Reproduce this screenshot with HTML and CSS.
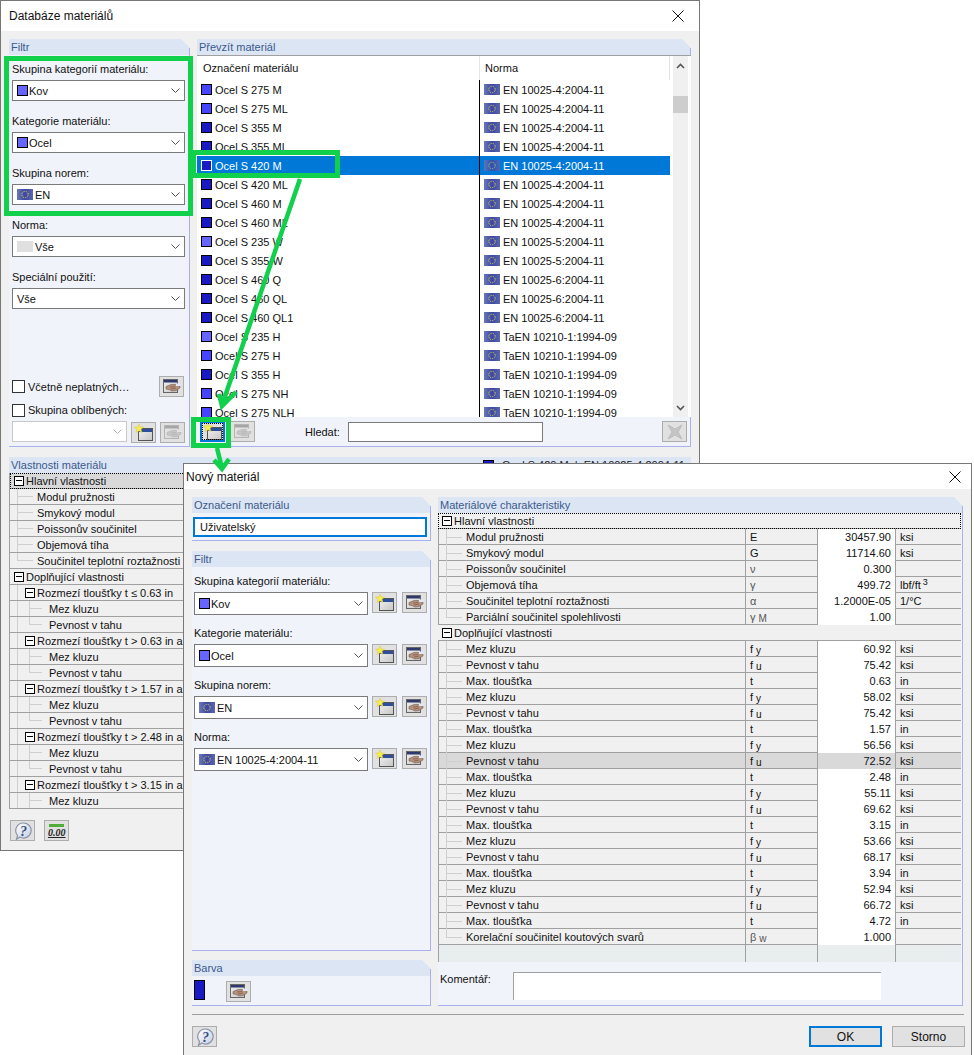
FILE: index.html
```html
<!DOCTYPE html>
<html lang="cs">
<head>
<meta charset="utf-8">
<title>Databáze materiálů</title>
<link rel="stylesheet" href="styles.css">
</head>
<body>
<svg class="defs" aria-hidden="true">
  <defs>
    <linearGradient id="flagbg" x1="0" y1="0" x2="1" y2="0"><stop offset="0" stop-color="#6a78b8"/><stop offset=".5" stop-color="#3c48a0"/><stop offset="1" stop-color="#5a66b0"/></linearGradient>
    <linearGradient id="bubble" x1="0" y1="0" x2="1" y2="1"><stop offset="0" stop-color="#ffffff"/><stop offset="1" stop-color="#c4cde0"/></linearGradient>
    <linearGradient id="winbody" x1="0" y1="0" x2="1" y2="1"><stop offset="0" stop-color="#f2f2f2"/><stop offset="1" stop-color="#c6c6c6"/></linearGradient>
    <symbol id="flag" viewBox="0 0 16 11"><rect width="16" height="11" fill="url(#flagbg)"/><circle cx="8" cy="5.5" r="3.2" fill="none" stroke="#e8d850" stroke-width="1" stroke-dasharray="1 1"/></symbol>
    <symbol id="chev" viewBox="0 0 9 5"><path d="M.5.5 4.500 4.500 8.500.5" fill="none" stroke="#555" stroke-width="1"/></symbol>
    <symbol id="new" viewBox="0 0 20 17"><rect x="4.500" y="4.500" width="14" height="12" fill="url(#winbody)" stroke="#555"/><rect x="5" y="5" width="13" height="3" fill="#2e4f9c"/><path d="M5 0 6.200 3 9.500 3.200 7 5.300 8 8.500 5 6.800 2 8.500 3 5.300 .5 3.200 3.800 3Z" fill="#f6ee50" stroke="#d8c830" stroke-width=".5"/></symbol>
    <symbol id="hand" viewBox="0 0 20 15"><rect x="1.500" y=".5" width="14" height="13" fill="url(#winbody)" stroke="#666"/><rect x="2" y="1" width="13" height="2.500" fill="#2e3a6e"/><path d="M4 7.500 9 5.500 13 5.500 18 7 18 9 14 11.500 10 12 7 10.500 4 10Z" fill="#b4917c" stroke="#6a4c40" stroke-width=".5"/><path d="M8 8 13 7.500M9 10 14 9" stroke="#6a4c40" stroke-width=".6"/><path d="M14 4.500h5v2.500h-5z" fill="#dfe8f4"/></symbol>
    <symbol id="xmark" viewBox="0 0 16 16"><path d="M1 1 8 5 15 1 11 8 15 15 8 11 1 15 5 8Z" fill="#8f8f8f" stroke="#777"/></symbol>
    <symbol id="help" viewBox="0 0 18 18"><path d="M9.500 1a7.500 7.500 0 1 1-3.600 14L2.500 17.300l1-4A7.500 7.500 0 0 1 9.500 1Z" fill="url(#bubble)" stroke="#8a93a8" stroke-width="1.200"/><text x="9.500" y="14" text-anchor="middle" class="helpq">?</text></symbol>
  </defs>
</svg>

<main class="canvas">
  <section class="win win-db">
    <header class="titlebar"><span>Databáze materiálů</span><svg class="close" viewBox="0 0 12 12"><path d="M.5.5 11.500 11.500M11.500.5.5 11.500"/></svg></header>
    <div class="db-body">
      <div class="db-top">
        <section class="panel">
          <h2 class="phead">Filtr</h2>
          <div class="pbody db-filter">
            <div class="field"><label>Skupina kategorií materiálu:</label><div class="select"><i class="sw l"></i><span class="t1">Kov</span><svg class="chev"><use href="#chev"/></svg></div></div>
            <div class="field"><label>Kategorie materiálu:</label><div class="select"><i class="sw l"></i><span class="t1">Ocel</span><svg class="chev"><use href="#chev"/></svg></div></div>
            <div class="field"><label>Skupina norem:</label><div class="select"><svg class="flag"><use href="#flag"/></svg><span>EN</span><svg class="chev"><use href="#chev"/></svg></div></div>
            <div class="field"><label>Norma:</label><div class="select"><i class="flag blank"></i><span>Vše</span><svg class="chev"><use href="#chev"/></svg></div></div>
            <div class="field"><label>Speciální použití:</label><div class="select"><span>Vše</span><svg class="chev"><use href="#chev"/></svg></div></div>
            <div class="checks">
              <div class="check-row"><i class="check"></i><span class="grow">Včetně neplatných…</span><button class="btn"><svg class="ic-hand"><use href="#hand"/></svg></button></div>
              <div class="check-row second"><i class="check"></i><span>Skupina oblíbených:</span></div>
              <div class="fav-row"><div class="select dis"><svg class="chev"><use href="#chev"/></svg></div><button class="btn"><svg class="ic-new"><use href="#new"/></svg></button><button class="btn off"><svg class="ic-hand"><use href="#hand"/></svg></button></div>
            </div>
          </div>
        </section>
        <section class="panel">
          <h2 class="phead">Převzít materiál</h2>
          <div class="list">
            <div class="rows">
              <div class="row lhead"><div class="nm">Označení materiálu</div><div class="no">Norma</div></div>
              <div class="row"><div class="nm"><i class="sw m"></i>Ocel S 275 M</div><div class="no"><svg class="flag"><use href="#flag"/></svg>EN 10025-4:2004-11</div></div>
              <div class="row"><div class="nm"><i class="sw m"></i>Ocel S 275 ML</div><div class="no"><svg class="flag"><use href="#flag"/></svg>EN 10025-4:2004-11</div></div>
              <div class="row"><div class="nm"><i class="sw d"></i>Ocel S 355 M</div><div class="no"><svg class="flag"><use href="#flag"/></svg>EN 10025-4:2004-11</div></div>
              <div class="row"><div class="nm"><i class="sw d"></i>Ocel S 355 ML</div><div class="no"><svg class="flag"><use href="#flag"/></svg>EN 10025-4:2004-11</div></div>
              <div class="row sel"><div class="nm"><i class="sw d"></i>Ocel S 420 M</div><div class="no"><svg class="flag"><use href="#flag"/></svg>EN 10025-4:2004-11</div></div>
              <div class="row"><div class="nm"><i class="sw d"></i>Ocel S 420 ML</div><div class="no"><svg class="flag"><use href="#flag"/></svg>EN 10025-4:2004-11</div></div>
              <div class="row"><div class="nm"><i class="sw d"></i>Ocel S 460 M</div><div class="no"><svg class="flag"><use href="#flag"/></svg>EN 10025-4:2004-11</div></div>
              <div class="row"><div class="nm"><i class="sw d"></i>Ocel S 460 ML</div><div class="no"><svg class="flag"><use href="#flag"/></svg>EN 10025-4:2004-11</div></div>
              <div class="row"><div class="nm"><i class="sw l"></i>Ocel S 235 W</div><div class="no"><svg class="flag"><use href="#flag"/></svg>EN 10025-5:2004-11</div></div>
              <div class="row"><div class="nm"><i class="sw d"></i>Ocel S 355 W</div><div class="no"><svg class="flag"><use href="#flag"/></svg>EN 10025-5:2004-11</div></div>
              <div class="row"><div class="nm"><i class="sw d"></i>Ocel S 460 Q</div><div class="no"><svg class="flag"><use href="#flag"/></svg>EN 10025-6:2004-11</div></div>
              <div class="row"><div class="nm"><i class="sw d"></i>Ocel S 460 QL</div><div class="no"><svg class="flag"><use href="#flag"/></svg>EN 10025-6:2004-11</div></div>
              <div class="row"><div class="nm"><i class="sw d"></i>Ocel S 460 QL1</div><div class="no"><svg class="flag"><use href="#flag"/></svg>EN 10025-6:2004-11</div></div>
              <div class="row"><div class="nm"><i class="sw l"></i>Ocel S 235 H</div><div class="no"><svg class="flag"><use href="#flag"/></svg>TaEN 10210-1:1994-09</div></div>
              <div class="row"><div class="nm"><i class="sw m"></i>Ocel S 275 H</div><div class="no"><svg class="flag"><use href="#flag"/></svg>TaEN 10210-1:1994-09</div></div>
              <div class="row"><div class="nm"><i class="sw d"></i>Ocel S 355 H</div><div class="no"><svg class="flag"><use href="#flag"/></svg>TaEN 10210-1:1994-09</div></div>
              <div class="row"><div class="nm"><i class="sw m"></i>Ocel S 275 NH</div><div class="no"><svg class="flag"><use href="#flag"/></svg>TaEN 10210-1:1994-09</div></div>
              <div class="row"><div class="nm"><i class="sw m"></i>Ocel S 275 NLH</div><div class="no"><svg class="flag"><use href="#flag"/></svg>TaEN 10210-1:1994-09</div></div>
            </div>
            <div class="scroll">
              <svg class="arrow" viewBox="0 0 9 6"><path d="M1 5 4.500 1.500 8 5" /></svg>
              <div class="thumb"></div>
              <svg class="arrow down" viewBox="0 0 9 6"><path d="M1 1 4.500 4.500 8 1" /></svg>
            </div>
          </div>
          <div class="strip">
            <button class="btn focus"><svg class="ic-new"><use href="#new"/></svg></button>
            <button class="btn off"><svg class="ic-hand"><use href="#hand"/></svg></button>
            <span class="find">Hledat:</span>
            <div class="find-input"></div>
            <button class="btn off push"><svg class="ic-x"><use href="#xmark"/></svg></button>
          </div>
        </section>
      </div>
      <section class="props">
        <h2 class="phead phead-split"><span>Vlastnosti materiálu</span><span class="phead-dark"><i class="sw d"></i>Ocel S 420 M&nbsp; | &nbsp;EN 10025-4:2004-11</span></h2>
        <div class="tree">
          <div class="tr active"><i class="box"></i>Hlavní vlastnosti</div>
          <div class="tr l1">Modul pružnosti</div>
          <div class="tr l1">Smykový modul</div>
          <div class="tr l1">Poissonův součinitel</div>
          <div class="tr l1">Objemová tíha</div>
          <div class="tr l1 end">Součinitel teplotní roztažnosti</div>
          <div class="tr"><i class="box"></i>Doplňující vlastnosti</div>
          <div class="tr g1"><i class="box"></i>Rozmezí tloušťky t ≤ 0.63 in</div>
          <div class="tr l2">Mez kluzu</div>
          <div class="tr l2 end">Pevnost v tahu</div>
          <div class="tr g1"><i class="box"></i>Rozmezí tloušťky t &gt; 0.63 in a t ≤ 1.57 in</div>
          <div class="tr l2">Mez kluzu</div>
          <div class="tr l2 end">Pevnost v tahu</div>
          <div class="tr g1"><i class="box"></i>Rozmezí tloušťky t &gt; 1.57 in a t ≤ 2.48 in</div>
          <div class="tr l2">Mez kluzu</div>
          <div class="tr l2 end">Pevnost v tahu</div>
          <div class="tr g1"><i class="box"></i>Rozmezí tloušťky t &gt; 2.48 in a t ≤ 3.15 in</div>
          <div class="tr l2">Mez kluzu</div>
          <div class="tr l2 end">Pevnost v tahu</div>
          <div class="tr g1"><i class="box"></i>Rozmezí tloušťky t &gt; 3.15 in a t ≤ 3.94 in</div>
          <div class="tr l2">Mez kluzu</div>
        </div>
      </section>
      <div class="db-foot">
        <button class="btn"><svg class="ic-help"><use href="#help"/></svg></button>
        <button class="btn num"><span class="numbar"></span><span class="numtxt">0.00</span></button>
      </div>
    </div>
  </section>

  <section class="win win-new">
    <header class="titlebar t2"><span>Nový materiál</span><svg class="close" viewBox="0 0 12 12"><path d="M.5.5 11.500 11.500M11.500.5.5 11.500"/></svg></header>
    <div class="new-body">
      <div class="new-main">
        <div class="new-left">
          <section class="panel">
            <h2 class="phead">Označení materiálu</h2>
            <div class="pbody name-body"><div class="name-input">Uživatelský</div></div>
          </section>
          <section class="panel filt2">
            <h2 class="phead">Filtr</h2>
            <div class="pbody nf">
              <div class="field2"><label>Skupina kategorií materiálu:</label><div class="sel-row"><div class="select s2"><i class="sw l"></i><span class="t1">Kov</span><svg class="chev"><use href="#chev"/></svg></div><button class="btn"><svg class="ic-new"><use href="#new"/></svg></button><button class="btn"><svg class="ic-hand"><use href="#hand"/></svg></button></div></div>
              <div class="field2"><label>Kategorie materiálu:</label><div class="sel-row"><div class="select s2"><i class="sw l"></i><span class="t1">Ocel</span><svg class="chev"><use href="#chev"/></svg></div><button class="btn"><svg class="ic-new"><use href="#new"/></svg></button><button class="btn"><svg class="ic-hand"><use href="#hand"/></svg></button></div></div>
              <div class="field2"><label>Skupina norem:</label><div class="sel-row"><div class="select s2"><svg class="flag"><use href="#flag"/></svg><span>EN</span><svg class="chev"><use href="#chev"/></svg></div><button class="btn"><svg class="ic-new"><use href="#new"/></svg></button><button class="btn"><svg class="ic-hand"><use href="#hand"/></svg></button></div></div>
              <div class="field2"><label>Norma:</label><div class="sel-row"><div class="select s2"><svg class="flag"><use href="#flag"/></svg><span>EN 10025-4:2004-11</span><svg class="chev"><use href="#chev"/></svg></div><button class="btn"><svg class="ic-new"><use href="#new"/></svg></button><button class="btn"><svg class="ic-hand"><use href="#hand"/></svg></button></div></div>
            </div>
          </section>
          <section class="panel">
            <h2 class="phead">Barva</h2>
            <div class="pbody color-body"><i class="color-sw"></i><button class="btn"><svg class="ic-hand"><use href="#hand"/></svg></button></div>
          </section>
        </div>
        <section class="panel right2">
          <h2 class="phead">Materiálové charakteristiky</h2>
          <div class="grid">
            <div class="gr group active"><i class="box"></i>Hlavní vlastnosti</div>
            <div class="gr"><div class="g-n">Modul pružnosti</div><div class="g-s">E</div><div class="g-v">30457.90</div><div class="g-u">ksi</div></div>
            <div class="gr"><div class="g-n">Smykový modul</div><div class="g-s">G</div><div class="g-v">11714.60</div><div class="g-u">ksi</div></div>
            <div class="gr"><div class="g-n">Poissonův součinitel</div><div class="g-s gk">ν</div><div class="g-v">0.300</div><div class="g-u"></div></div>
            <div class="gr"><div class="g-n">Objemová tíha</div><div class="g-s gk">γ</div><div class="g-v">499.72</div><div class="g-u">lbf/ft<sup>3</sup></div></div>
            <div class="gr"><div class="g-n">Součinitel teplotní roztažnosti</div><div class="g-s gk">α</div><div class="g-v">1.2000E-05</div><div class="g-u">1/°C</div></div>
            <div class="gr"><div class="g-n end">Parciální součinitel spolehlivosti</div><div class="g-s gk">γ<small>M</small></div><div class="g-v">1.00</div><div class="g-u"></div></div>
            <div class="gr group"><i class="box"></i>Doplňující vlastnosti</div>
            <div class="gr"><div class="g-n">Mez kluzu</div><div class="g-s">f<small>y</small></div><div class="g-v">60.92</div><div class="g-u">ksi</div></div>
            <div class="gr"><div class="g-n">Pevnost v tahu</div><div class="g-s">f<small>u</small></div><div class="g-v">75.42</div><div class="g-u">ksi</div></div>
            <div class="gr"><div class="g-n">Max. tloušťka</div><div class="g-s">t</div><div class="g-v">0.63</div><div class="g-u">in</div></div>
            <div class="gr"><div class="g-n">Mez kluzu</div><div class="g-s">f<small>y</small></div><div class="g-v">58.02</div><div class="g-u">ksi</div></div>
            <div class="gr"><div class="g-n">Pevnost v tahu</div><div class="g-s">f<small>u</small></div><div class="g-v">75.42</div><div class="g-u">ksi</div></div>
            <div class="gr"><div class="g-n">Max. tloušťka</div><div class="g-s">t</div><div class="g-v">1.57</div><div class="g-u">in</div></div>
            <div class="gr"><div class="g-n">Mez kluzu</div><div class="g-s">f<small>y</small></div><div class="g-v">56.56</div><div class="g-u">ksi</div></div>
            <div class="gr hl"><div class="g-n">Pevnost v tahu</div><div class="g-s">f<small>u</small></div><div class="g-v">72.52</div><div class="g-u">ksi</div></div>
            <div class="gr"><div class="g-n">Max. tloušťka</div><div class="g-s">t</div><div class="g-v">2.48</div><div class="g-u">in</div></div>
            <div class="gr"><div class="g-n">Mez kluzu</div><div class="g-s">f<small>y</small></div><div class="g-v">55.11</div><div class="g-u">ksi</div></div>
            <div class="gr"><div class="g-n">Pevnost v tahu</div><div class="g-s">f<small>u</small></div><div class="g-v">69.62</div><div class="g-u">ksi</div></div>
            <div class="gr"><div class="g-n">Max. tloušťka</div><div class="g-s">t</div><div class="g-v">3.15</div><div class="g-u">in</div></div>
            <div class="gr"><div class="g-n">Mez kluzu</div><div class="g-s">f<small>y</small></div><div class="g-v">53.66</div><div class="g-u">ksi</div></div>
            <div class="gr"><div class="g-n">Pevnost v tahu</div><div class="g-s">f<small>u</small></div><div class="g-v">68.17</div><div class="g-u">ksi</div></div>
            <div class="gr"><div class="g-n">Max. tloušťka</div><div class="g-s">t</div><div class="g-v">3.94</div><div class="g-u">in</div></div>
            <div class="gr"><div class="g-n">Mez kluzu</div><div class="g-s">f<small>y</small></div><div class="g-v">52.94</div><div class="g-u">ksi</div></div>
            <div class="gr"><div class="g-n">Pevnost v tahu</div><div class="g-s">f<small>u</small></div><div class="g-v">66.72</div><div class="g-u">ksi</div></div>
            <div class="gr"><div class="g-n">Max. tloušťka</div><div class="g-s">t</div><div class="g-v">4.72</div><div class="g-u">in</div></div>
            <div class="gr"><div class="g-n end">Korelační součinitel koutových svarů</div><div class="g-s gk">β<small>w</small></div><div class="g-v">1.000</div><div class="g-u"></div></div>
            <div class="gr blank"><div class="g-n"></div><div class="g-s"></div><div class="g-v"></div><div class="g-u"></div></div>
          </div>
          <div class="pbody comment"><span>Komentář:</span><div class="comment-box"></div></div>
        </section>
      </div>
      <div class="new-foot">
        <button class="btn"><svg class="ic-help"><use href="#help"/></svg></button>
        <div class="actions"><button class="act ok">OK</button><button class="act">Storno</button></div>
      </div>
    </div>
  </section>

  <svg class="marks" viewBox="0 0 974 1055" aria-hidden="true">
    <rect x="6.500" y="58.500" width="184" height="155"/>
    <rect x="193.500" y="152.500" width="144" height="23"/>
    <rect x="193.500" y="419.500" width="35" height="26"/>
    <path d="M300 179 222 405M219 394 222 406 236 392M217 448 222 468M214 460 222 469 229 459"/>
  </svg>
</main>
</body>
</html>
```
FILE: styles.css
```css
* { box-sizing: border-box; }
html, body { margin: 0; padding: 0; background: #fff; }
body { font: 11px/16px "Liberation Sans", Arial, sans-serif; color: #111; overflow: hidden; }
.defs { position: absolute; width: 0; height: 0; }
.canvas { position: relative; width: 974px; height: 1055px; overflow: hidden; background: #fff; }

.win { position: absolute; background: #f0f0f0; border: 1px solid #777; display: flex; flex-direction: column; }
.win-db { left: 0; top: 0; width: 700px; height: 851px; }
.win-new { left: 183px; top: 463px; width: 789px; height: 600px; }

.titlebar { height: 30px; flex: none; background: #fff; display: flex; align-items: center; justify-content: space-between; padding: 0 15px 0 8px; font-size: 12px; }
.titlebar.t2 { height: 25px; padding: 0 10px 0 2px; }
.close { width: 12px; height: 12px; }
.close path { stroke: #111; stroke-width: 1; fill: none; }

.db-body { padding: 8px 8px 0; display: flex; flex-direction: column; flex: 1; min-height: 0; }
.db-top { display: grid; grid-template-columns: 181px 494px; gap: 7px; height: 408px; }

.panel { display: flex; flex-direction: column; min-width: 0; }
.phead { margin: 0; flex: none; height: 16px; font: inherit; color: #3a5a8c; padding-left: 2px; background: linear-gradient(#a9b0ee, #a9b0ee) right top 9px / 1px 100% no-repeat, #dce5f4; clip-path: polygon(0 0, calc(100% - 9px) 0, 100% 9px, 100% 100%, 0 100%); }
.pbody { background: #f0f3f9; border-right: 1px solid #a9b0ee; border-bottom: 1px solid #a9b0ee; flex: 1; }

.db-filter { display: flex; flex-direction: column; padding: 6px 4px 3px 3px; }
.field { display: flex; flex-direction: column; gap: 3px; margin-bottom: 12px; }
.field label, .field2 label { display: block; height: 16px; white-space: nowrap; }
.select { height: 21px; background: #fff; border: 1px solid #7a7a7a; display: flex; align-items: center; padding-left: 4px; white-space: nowrap; }
.select .chev { width: 9px; height: 5px; margin-left: auto; margin-right: 4px; flex: none; }
.select.dis { border-color: #c8c8c8; width: 116px; height: 21px; }
.select.dis .chev { opacity: .45; }
.sw { display: inline-block; flex: none; width: 11px; height: 11px; border: 1px solid #000; margin-right: 1px; }
.sw.l { background: #6666ff; }
.sw.m { background: #4545ff; }
.sw.d { background: #1a1ac4; }
.flag { width: 16px; height: 11px; flex: none; margin-right: 2px; }
.flag.blank { display: inline-block; background: #e0e0e0; }

.checks { margin-top: auto; display: flex; flex-direction: column; }
.check-row { display: flex; align-items: center; height: 21px; }
.check-row .grow { flex: 1; }
.check-row .btn { margin-right: 1px; }
.check-row.second { margin-top: 3px; height: 20px; }
.check { width: 13px; height: 13px; flex: none; border: 1px solid #333; background: #fff; margin-right: 3px; }
.fav-row { display: flex; gap: 4px; align-items: flex-start; margin-top: 1px; }
.fav-row .btn { margin-top: 1px; }

.btn { width: 25px; height: 21px; flex: none; padding: 0; background: #e1e1e1; border: 1px solid #adadad; display: inline-flex; align-items: center; justify-content: center; font: inherit; }
.btn.off svg { opacity: .35; filter: grayscale(1); }
.btn.focus { border: 2px solid #0078d7; outline: 1px dotted #000; outline-offset: -3px; }
.ic-new { width: 20px; height: 17px; }
.ic-hand { width: 20px; height: 15px; }
.ic-x { width: 16px; height: 16px; }
.ic-help { width: 18px; height: 18px; }
.helpq { font: italic bold 14px "Liberation Serif", serif; fill: #33507f; }

.list { height: 362px; flex: none; background: #fff; border-top: 1px solid #a0a0a0; display: flex; overflow: hidden; }
.rows { width: 473px; flex: none; }
.row { display: grid; grid-template-columns: 283px 190px; height: 19px; }
.row .nm { display: flex; align-items: center; padding-left: 4px; border-right: 1px solid #000; white-space: nowrap; }
.row .nm .sw { margin-right: 3px; }
.row .no { display: flex; align-items: center; padding-left: 4px; white-space: nowrap; }
.row .no .flag { margin-right: 3px; }
.row.lhead { height: 24px; }
.row.lhead .nm { padding-left: 6px; border-right: 1px solid #e4e4e4; }
.row.lhead .no { padding-left: 5px; border-right: 1px solid #e4e4e4; }
.row.sel { background: #0078d7; color: #fff; }
.row.sel .sw { border-color: #fff; }
.row.sel .flag { opacity: .8; }

.scroll { width: 15px; margin-left: 3px; background: #f0f0f0; display: flex; flex-direction: column; }
.arrow { width: 9px; height: 6px; margin: 7px auto 0; flex: none; }
.arrow path { fill: none; stroke: #555; stroke-width: 1.6; }
.arrow.down { margin: auto auto 6px; }
.thumb { height: 17px; margin-top: 27px; background: #cdcdcd; flex: none; }

.strip { flex: 1; background: #f0f3f9; border-right: 1px solid #a9b0ee; border-bottom: 1px solid #a9b0ee; display: flex; align-items: center; gap: 5px; padding: 0 3px; }
.find { margin-left: 45px; width: 37px; margin-right: 1px; }
.find-input { width: 195px; height: 20px; background: #fff; border: 1px solid #7a7a7a; }
.push { margin-left: auto; }

.props { margin-top: 10px; width: 682px; }
.phead-split { display: flex; justify-content: space-between; padding-right: 6px; clip-path: none; background: #dce5f4; }
.phead-dark { color: #222; display: flex; align-items: center; }
.phead-dark .sw { margin-right: 8px; }
.tree { border-left: 1px solid #a0a0a0; background: #f0f0f0; height: 336px; overflow: hidden; }
.tr { height: 16px; border-bottom: 1px solid #a0a0a0; display: flex; align-items: center; padding-left: 4px; white-space: nowrap; }
.box { width: 10px; height: 10px; flex: none; border: 1px solid #000; margin-right: 2px; background: linear-gradient(#000, #000) center / 6px 1px no-repeat #fff; }
.tr.active { background: #d9d9d9; outline: 1px dotted #000; outline-offset: -1px; }
.gr.active { outline: 1px dotted #000; outline-offset: -1px; }
.tr.l1 { padding-left: 27px; background: linear-gradient(#cfcfcf, #cfcfcf) 7px 0 / 1px 100% no-repeat, linear-gradient(#cfcfcf, #cfcfcf) 7px 50% / 16px 1px no-repeat; }
.tr.l1.end { background: linear-gradient(#cfcfcf, #cfcfcf) 7px 0 / 1px 50% no-repeat, linear-gradient(#cfcfcf, #cfcfcf) 7px 50% / 16px 1px no-repeat; }
.tr.g1 { padding-left: 15px; background: linear-gradient(#cfcfcf, #cfcfcf) 7px 0 / 1px 100% no-repeat; }
.tr.l2 { padding-left: 39px; background: linear-gradient(#cfcfcf, #cfcfcf) 7px 0 / 1px 100% no-repeat, linear-gradient(#cfcfcf, #cfcfcf) 19px 0 / 1px 100% no-repeat, linear-gradient(#cfcfcf, #cfcfcf) 19px 50% / 13px 1px no-repeat; }
.tr.l2.end { background: linear-gradient(#cfcfcf, #cfcfcf) 7px 0 / 1px 100% no-repeat, linear-gradient(#cfcfcf, #cfcfcf) 19px 0 / 1px 50% no-repeat, linear-gradient(#cfcfcf, #cfcfcf) 19px 50% / 13px 1px no-repeat; }
.db-foot { display: flex; gap: 9px; margin-top: 11px; padding-left: 1px; }
.btn.num { display: block; padding: 2px 3px 0; }
.numbar { display: block; height: 3px; margin: 0 1px; background: #4fae3a; }
.numtxt { display: block; font: italic bold 10px/12px "Liberation Serif", serif; color: #222; text-decoration: underline; text-align: center; }

.new-body { flex: 1; padding: 8px 9px 0 8px; display: flex; flex-direction: column; min-height: 0; }
.new-main { display: grid; grid-template-columns: 239px 525px; gap: 7px; height: 509px; flex: none; }
.new-left { display: flex; flex-direction: column; gap: 10px; min-height: 0; }
.name-body { flex: none; height: 28px; padding: 4px 3px 0 1px; }
.name-input { height: 20px; border: 2px solid #0078d7; background: #fff; padding-left: 5px; line-height: 16px; }
.filt2 { flex: 1; }
.nf { padding: 6px 3px 0 2px; display: flex; flex-direction: column; gap: 10px; }
.field2 { display: flex; flex-direction: column; gap: 3px; }
.sel-row { display: flex; gap: 5px; align-items: flex-start; }
.select.s2 { width: 174px; height: 23px; margin-right: -1px; }
.color-body { flex: none; height: 30px; display: flex; align-items: flex-start; padding: 4px 2px 0; gap: 21px; }
.color-sw { width: 11px; height: 20px; background: #1a1ac4; border: 1px solid #000; }
.color-body .btn { margin-top: 1px; }
.new-left .panel:last-child { margin-top: -1px; }

.right2 { min-height: 0; }
.grid { flex: none; border-right: 1px solid #a9b0ee; padding-right: 1px; background: #f0f3f9; }
.gr { display: grid; grid-template-columns: 307px 72px 78px 66px; height: 16px; width: 523px; border-bottom: 1px solid #a0a0a0; background: #f0f0f0; }
.gr.group { display: flex; align-items: center; padding-left: 4px; }
.gr > div { display: flex; align-items: center; white-space: nowrap; }
.g-n { border-left: 1px solid #a0a0a0; padding-left: 27px; background: linear-gradient(#cfcfcf, #cfcfcf) 7px 0 / 1px 100% no-repeat, linear-gradient(#cfcfcf, #cfcfcf) 7px 50% / 16px 1px no-repeat; }
.g-n.end { background: linear-gradient(#cfcfcf, #cfcfcf) 7px 0 / 1px 50% no-repeat, linear-gradient(#cfcfcf, #cfcfcf) 7px 50% / 16px 1px no-repeat; }
.g-s { border-left: 1px solid #a0a0a0; padding-left: 4px; }
.g-s.gk { color: #555; }
.g-s small { font-size: 10px; margin-left: 3px; position: relative; top: 2px; }
.g-v { border-left: 1px solid #a0a0a0; background: #fff; justify-content: flex-end; padding-right: 4px; }
.g-u { border-left: 1px solid #a0a0a0; padding-left: 4px; }
.g-u sup { font-size: 9px; line-height: 0; margin-left: 2px; position: relative; top: -3px; }
.gr.hl { background: #d9d9d9; }
.gr.hl .g-v { background: #d9d9d9; }
.gr.blank { height: 17px; background: #e8eeee; border-bottom: 0; }
.gr.blank .g-v, .gr.blank .g-n { background: #e8eeee; }
.comment { display: flex; align-items: flex-start; padding: 10px 0 0 2px; }
.comment span { width: 54px; margin-top: -1px; }
.comment-box { width: 368px; height: 28px; margin-left: 19px; background: #fff; border-top: 1px solid #a0a0a0; border-left: 1px solid #a0a0a0; }

.new-foot { margin-top: 8px; border-top: 1px solid #a0a0a0; padding-top: 11px; display: flex; justify-content: space-between; width: 772px; }
.actions { display: flex; gap: 10px; margin-right: -1px; }
.act { width: 73px; height: 21px; padding: 0; background: #e1e1e1; border: 1px solid #adadad; font: 12px "Liberation Sans", Arial, sans-serif; color: #111; }
.act.ok { border: 2px solid #0078d7; }

.marks { position: absolute; left: 0; top: 0; width: 974px; height: 1055px; pointer-events: none; }
.marks rect { fill: none; stroke: #10d04c; stroke-width: 5; }
.marks path { fill: none; stroke: #10d04c; stroke-width: 4.500; }
```
